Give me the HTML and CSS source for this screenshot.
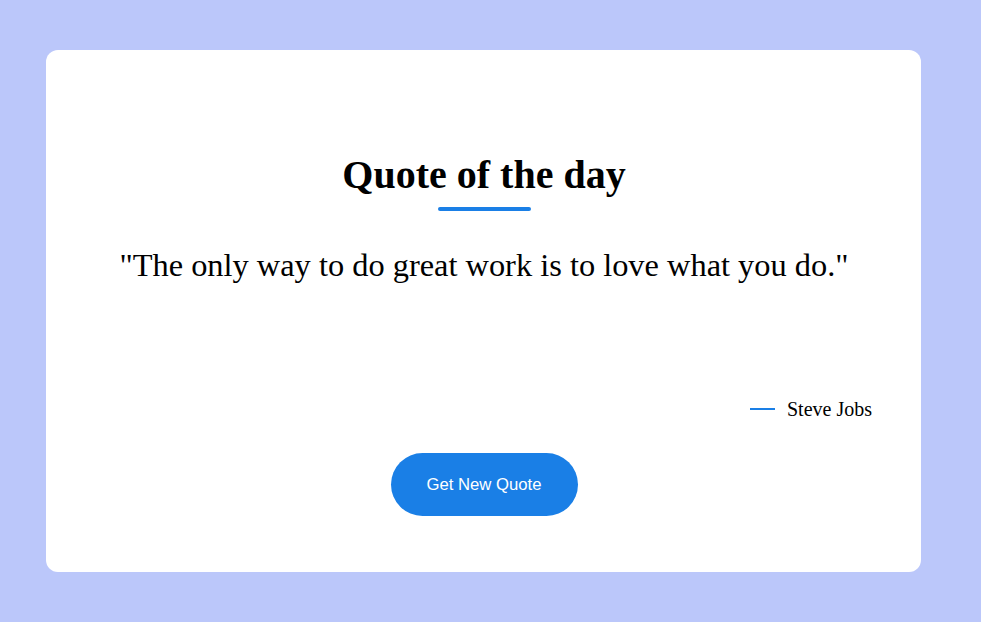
FILE: index.html
```html
<!DOCTYPE html>
<html>
<head>
<meta charset="utf-8">
<link rel="stylesheet" href="styles.css">
</head>
<body>
<main class="card">
  <h1 class="title">Quote of the day</h1>
  <div class="rule"></div>
  <p class="quote">"The only way to do great work is to love what you do."</p>
  <div class="author"><span class="dash"></span><span class="name">Steve Jobs</span></div>
  <button class="btn">Get New Quote</button>
</main>
</body>
</html>
```
FILE: styles.css
```css
html, body { margin: 0; padding: 0; }
body {
  background: #bbc7fa;
  width: 981px;
  height: 622px;
  box-sizing: border-box;
  padding: 50px 60px 50px 46px;
  font-family: "Liberation Serif", "Times New Roman", serif;
  overflow: hidden;
}
.card {
  background: #fff;
  border-radius: 12px;
  height: 522px;
  box-sizing: border-box;
  display: flex;
  flex-direction: column;
  align-items: center;
  padding: 0 49px 0 50px;
}
.title {
  margin: 101px 0 0;
  font-size: 40px;
  font-weight: bold;
  line-height: 48px;
  color: #000;
}
.rule {
  width: 93px;
  height: 4px;
  border-radius: 2px;
  background: #1a7fe6;
  margin-top: 8px;
}
.quote {
  margin: 34px 0 0;
  font-size: 32.4px;
  line-height: 40px;
  color: #000;
}
.author {
  align-self: stretch;
  display: flex;
  justify-content: flex-end;
  align-items: center;
  gap: 12px;
  margin-top: 112px;
  font-size: 20px;
  line-height: 24px;
}
.dash {
  width: 25px;
  height: 2px;
  background: #1a7fe6;
}
.name { color: #000; }
.btn {
  margin-top: 32px;
  width: 187px;
  height: 63px;
  border: none;
  border-radius: 32px;
  background: #1a7fe6;
  color: #fff;
  font-family: "Liberation Sans", Arial, sans-serif;
  font-size: 16.7px;
  cursor: pointer;
}
```
